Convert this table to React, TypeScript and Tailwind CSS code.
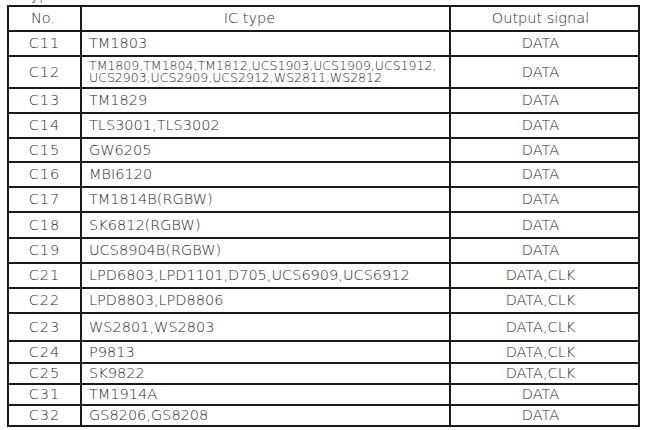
type Row = {
  no: string;
  ic: string[];
  out: string;
  h: string;
};

const rows: Row[] = [
  { no: 'C11', ic: ['TM1803'], out: 'DATA', h: 'h-[25px]' },
  {
    no: 'C12',
    ic: ['TM1809,TM1804,TM1812,UCS1903,UCS1909,UCS1912,', 'UCS2903,UCS2909,UCS2912,WS2811,WS2812'],
    out: 'DATA',
    h: 'h-[32px]',
  },
  { no: 'C13', ic: ['TM1829'], out: 'DATA', h: 'h-[25px]' },
  { no: 'C14', ic: ['TLS3001,TLS3002'], out: 'DATA', h: 'h-[25px]' },
  { no: 'C15', ic: ['GW6205'], out: 'DATA', h: 'h-[24px]' },
  { no: 'C16', ic: ['MBI6120'], out: 'DATA', h: 'h-[25px]' },
  { no: 'C17', ic: ['TM1814B(RGBW)'], out: 'DATA', h: 'h-[25px]' },
  { no: 'C18', ic: ['SK6812(RGBW)'], out: 'DATA', h: 'h-[26px]' },
  { no: 'C19', ic: ['UCS8904B(RGBW)'], out: 'DATA', h: 'h-[25px]' },
  { no: 'C21', ic: ['LPD6803,LPD1101,D705,UCS6909,UCS6912'], out: 'DATA,CLK', h: 'h-[25px]' },
  { no: 'C22', ic: ['LPD8803,LPD8806'], out: 'DATA,CLK', h: 'h-[25px]' },
  { no: 'C23', ic: ['WS2801,WS2803'], out: 'DATA,CLK', h: 'h-[28px]' },
  { no: 'C24', ic: ['P9813'], out: 'DATA,CLK', h: 'h-[22px]' },
  { no: 'C25', ic: ['SK9822'], out: 'DATA,CLK', h: 'h-[21px]' },
  { no: 'C31', ic: ['TM1914A'], out: 'DATA', h: 'h-[21px]' },
  { no: 'C32', ic: ['GS8206,GS8208'], out: 'DATA', h: 'h-[19px]' },
];

export default function App() {
  return (
    <div className="w-[665px] h-[430px] overflow-hidden bg-white text-[#2b2830] font-['DejaVu_Sans',sans-serif] font-light">
      {/* caption cut off at the top */}
      <div className="mt-[-13px] h-[16px] pl-[7px] text-[14px] leading-[16px]">IC type</div>

      <div className="mt-[2px] ml-[7px] w-[633px] border-2 border-[#1a1a1a]">
        {/* Header */}
        <div className="flex h-[25px] border-b-2 border-[#1a1a1a] text-[14.5px]">
          <div className="w-[73px] border-r-2 border-[#1a1a1a] flex items-center justify-center pr-[3px]">No.</div>
          <div className="w-[369px] border-r-2 border-[#1a1a1a] flex items-center justify-center pr-8">IC type</div>
          <div className="flex-1 flex items-center justify-center pr-2">Output signal</div>
        </div>

        {rows.map((r, i) => (
          <div
            key={r.no}
            className={`flex ${r.h} ${i < rows.length - 1 ? 'border-b-2 border-[#1a1a1a]' : ''} text-[14.5px] leading-none`}
          >
            <div className="w-[73px] border-r-2 border-[#1a1a1a] flex items-center justify-center tracking-[1px]">
              {r.no}
            </div>
            <div className="w-[369px] border-r-2 border-[#1a1a1a] flex flex-col justify-center pl-[7px]">
              {r.ic.length > 1 ? (
                r.ic.map((t) => (
                  <div key={t} className="text-[12.5px] leading-[12px]">
                    {t}
                  </div>
                ))
              ) : (
                <div>{r.ic[0]}</div>
              )}
            </div>
            <div className="flex-1 flex items-center justify-center pr-2">{r.out}</div>
          </div>
        ))}
      </div>
    </div>
  );
}
